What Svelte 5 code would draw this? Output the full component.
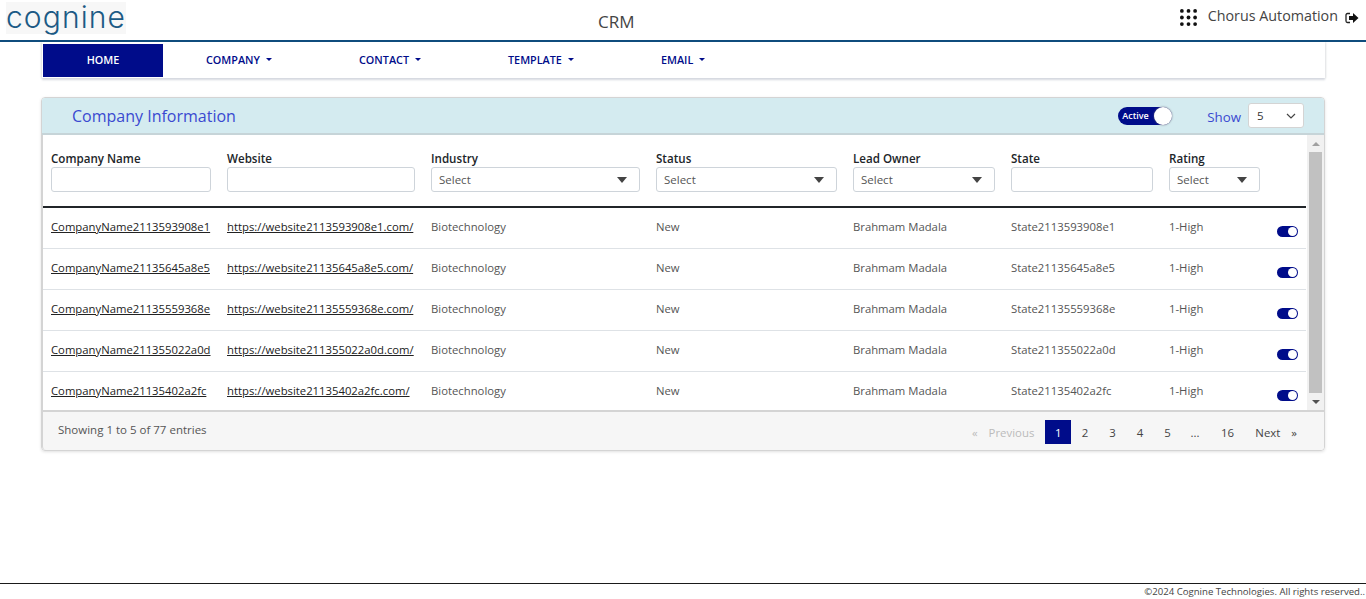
<script>
  const navItems = [
    { label: "COMPANY", width: 153 },
    { label: "CONTACT", width: 149 },
    { label: "TEMPLATE", width: 153 },
    { label: "EMAIL", width: 100 },
  ];
  const ids = ["2113593908e1", "21135645a8e5", "21135559368e", "211355022a0d", "21135402a2fc"];
  const pages = ["2", "3", "4", "5", "..."];
  const filters = [
    { name: "Company Name", w: 160 },
    { name: "Website", w: 188 },
    { name: "Industry", w: 209, select: true },
    { name: "Status", w: 181, select: true },
    { name: "Lead Owner", w: 142, select: true },
    { name: "State", w: 142 },
    { name: "Rating", w: 91, select: true },
  ];
</script>

<div class="page">
  <header class="top">
    <div class="logo">cognine</div>
    <div class="app-title">CRM</div>
    <div class="user">
      <svg class="grid-icon" width="17" height="17" viewBox="0 0 18 18" fill="#111">
        {#each [2, 9, 16] as y}
          {#each [2, 9, 16] as x}
            <circle cx={x} cy={y} r="2" />
          {/each}
        {/each}
      </svg>
      <span class="user-name">Chorus Automation</span>
      <svg class="logout" width="14" height="12" viewBox="0 0 14 12">
        <path d="M5 1.500H2.500A1.500 1.500 0 0 0 1 3v6a1.500 1.500 0 0 0 1.500 1.500H5" fill="none" stroke="#222" stroke-width="1.300" />
        <path d="M4 4h4V1l5.500 5L8 11V8H4z" fill="#111" />
      </svg>
    </div>
  </header>

  <nav class="nav">
    <a class="nav-home" href="#home">HOME</a>
    {#each navItems as item}
      <a class="nav-item" href="#menu" style="width: {item.width}px">{item.label}<span class="caret"></span></a>
    {/each}
  </nav>

  <section class="card">
    <div class="card-head">
      <h2>Company Information</h2>
      <div class="card-tools">
        <div class="active-toggle"><span>Active</span><i></i></div>
        <span class="show">Show</span>
        <div class="show-select">
          <span>5</span>
          <svg width="10" height="6" viewBox="0 0 10 6"><path d="M1 1l4 4 4-4" fill="none" stroke="#444" stroke-width="1.200" /></svg>
        </div>
      </div>
    </div>

    <div class="table-wrap">
      <table>
        <colgroup>
          <col style="width: 176px" /><col style="width: 204px" /><col style="width: 225px" /><col style="width: 197px" />
          <col style="width: 158px" /><col style="width: 158px" /><col style="width: 96px" /><col />
        </colgroup>
        <thead>
          <tr>
            {#each filters as f}
              <th>
                <div class="th-label">{f.name}</div>
                <div class="filter" style="width: {f.w}px">
                  {#if f.select}
                    <span>Select</span><b class="tri"></b>
                  {/if}
                </div>
              </th>
            {/each}
            <th></th>
          </tr>
        </thead>
        <tbody>
          {#each ids as id}
            <tr>
              <td><a href="#c">CompanyName{id}</a></td>
              <td><a href="#w">https://website{id}.com/</a></td>
              <td>Biotechnology</td>
              <td>New</td>
              <td>Brahmam Madala</td>
              <td>State{id}</td>
              <td>1-High</td>
              <td class="toggle-cell"><div class="mini-toggle"><i></i></div></td>
            </tr>
          {/each}
        </tbody>
      </table>
      <div class="scrollbar">
        <div class="arrow up"></div>
        <div class="thumb"></div>
        <div class="arrow down"></div>
      </div>
    </div>

    <div class="card-foot">
      <div class="entries">Showing 1 to 5 of 77 entries</div>
      <div class="pager">
        <span class="muted"><span class="chev">«</span>Previous</span>
        <span class="current">1</span>
        {#each pages as p}
          <span class="pg">{p}</span>
        {/each}
        <span class="pg last">16</span>
        <span class="next">Next<span class="chev-r">»</span></span>
      </div>
    </div>
  </section>

  <footer class="foot">©2024 Cognine Technologies. All rights reserved..</footer>
</div>

<style>
  :global(body) {
    margin: 0;
    background: #fff;
    font-family: "Open Sans", "Noto Sans", sans-serif;
    color: #444;
  }

  .page {
    height: 599px;
    display: flex;
    flex-direction: column;
    overflow: hidden;
  }

  .top {
    height: 40px;
    border-bottom: 2px solid #0f4c7d;
    display: flex;
    align-items: flex-start;
    position: relative;
    flex-shrink: 0;
  }

  .logo {
    margin: 2px 0 0 6px;
    width: 120px;
    height: 32px;
    background: #f7f7f7;
    color: #1c5a85;
    font-family: Inter, sans-serif;
    font-weight: 300;
    font-size: 30px;
    line-height: 30px;
    letter-spacing: 1.1px;
    text-align: center;
  }

  .app-title {
    position: absolute;
    left: 598px;
    top: 11px;
    font-size: 17px;
    line-height: 22px;
    color: #444;
  }

  .user {
    margin-left: auto;
    display: flex;
    align-items: center;
    padding: 6px 7px 0 0;
  }

  .grid-icon {
    margin-top: 3px;
  }

  .user-name {
    margin-left: 11px;
    margin-top: -1px;
    font-size: 14.300px;
    line-height: 18px;
    color: #444;
  }

  .logout {
    margin: 3px 0 0 7px;
  }

  .nav {
    margin: 0 41px 0 42px;
    height: 33px;
    padding: 2px 0 1px 1px;
    display: flex;
    background: #fff;
    box-shadow: 0 2px 2px #d5d8df, 1px 0 2px #e8e8e8, -1px 0 2px #e8e8e8;
    flex-shrink: 0;
  }

  .nav a {
    text-decoration: none;
    font-size: 10.800px;
    font-weight: 600;
    display: flex;
    align-items: center;
    height: 33px;
    padding-bottom: 2px;
    box-sizing: border-box;
  }

  .nav-home {
    width: 120px;
    justify-content: center;
    background: #000c8a;
    color: #fff;
  }

  .nav-item {
    color: #000c8a;
    padding-left: 43px;
  }

  .caret {
    margin-left: 6px;
    border-top: 3px solid #000c8a;
    border-left: 3px solid transparent;
    border-right: 3px solid transparent;
  }

  .card {
    margin: 19px 41px 0;
    height: 352px;
    border: 1px solid #d4d4d4;
    border-radius: 4px;
    box-shadow: 0 1px 3px rgba(0, 0, 0, 0.12);
    display: flex;
    flex-direction: column;
    flex-shrink: 0;
  }

  .card-head {
    height: 35px;
    background: #d4ebf0;
    border-bottom: 2px solid #c6d4d8;
    border-radius: 3px 3px 0 0;
    display: flex;
    align-items: center;
    justify-content: space-between;
    padding: 0 20px 0 30px;
    flex-shrink: 0;
  }

  h2 {
    margin: 0;
    font-size: 16px;
    font-weight: 400;
    color: #3a49d0;
  }

  .card-tools {
    display: flex;
    align-items: center;
  }

  .active-toggle {
    width: 54px;
    height: 18px;
    border-radius: 9px;
    background: #000c8a;
    display: flex;
    align-items: center;
    justify-content: space-between;
    color: #fff;
    margin-right: 35px;
  }

  .active-toggle span {
    font-size: 9px;
    font-weight: 600;
    padding-left: 4px;
  }

  .active-toggle i {
    width: 18px;
    height: 18px;
    background: #fff;
    border-radius: 50%;
    box-shadow: 0 0 2px #667;
  }

  .show {
    font-size: 13.300px;
    color: #3a49d0;
    margin-right: 7px;
    margin-top: 2px;
  }

  .show-select {
    width: 56px;
    height: 25px;
    background: #fff;
    border: 1px solid #d4d4d4;
    border-radius: 3px;
    display: flex;
    align-items: center;
    justify-content: space-between;
    padding: 0 7px 0 8px;
    box-sizing: border-box;
    font-size: 11.500px;
    color: #333;
  }

  .table-wrap {
    height: 275px;
    display: flex;
    overflow: hidden;
    border-left: 1px solid #d4d4d4;
    border-bottom: 2px solid #d4d4d4;
    flex-shrink: 0;
  }

  table {
    width: 1263px;
    flex-shrink: 0;
    table-layout: fixed;
    border-collapse: collapse;
    align-self: flex-start;
  }

  th {
    height: 71px;
    padding: 0 0 0 8px;
    text-align: left;
    vertical-align: top;
    border-bottom: 2px solid #212529;
    overflow: visible;
    white-space: nowrap;
  }

  .th-label {
    margin-top: 16px;
    font-size: 11.600px;
    line-height: 16px;
    font-weight: 600;
    color: #212529;
  }

  .filter {
    height: 25px;
    margin-top: 0;
    border: 1px solid #ced4da;
    border-radius: 3px;
    box-sizing: border-box;
    display: flex;
    align-items: center;
    justify-content: space-between;
    padding: 0 12px 0 7px;
    font-size: 11.500px;
    font-weight: 400;
    color: #555;
  }

  .tri {
    border-top: 6px solid #444;
    border-left: 5px solid transparent;
    border-right: 5px solid transparent;
  }

  td {
    height: 41px;
    padding: 0 0 3px 8px;
    box-sizing: border-box;
    border-bottom: 1px solid #dee2e6;
    font-size: 11.300px;
    color: #555;
    white-space: nowrap;
    overflow: visible;
  }

  td a {
    color: #222;
    text-decoration: underline;
  }

  td.toggle-cell {
    padding: 7px 0 0 20px;
  }

  .mini-toggle {
    width: 21px;
    height: 11px;
    border-radius: 6px;
    background: #000c8a;
    position: relative;
  }

  .mini-toggle i {
    position: absolute;
    right: 1px;
    top: 1px;
    width: 9px;
    height: 9px;
    border-radius: 50%;
    background: #fff;
  }

  .scrollbar {
    width: 17px;
    margin-left: 1px;
    background: #f1f1f1;
    display: flex;
    flex-direction: column;
    align-items: center;
  }

  .thumb {
    width: 13px;
    flex: 1;
    background: #c1c1c1;
  }

  .arrow {
    height: 17px;
    width: 13px;
    display: flex;
    justify-content: center;
    align-items: center;
    position: relative;
  }

  .arrow::after {
    content: "";
    border-left: 4px solid transparent;
    border-right: 4px solid transparent;
  }

  .arrow.up::after {
    border-bottom: 4px solid #a0a0a0;
  }

  .arrow.down::after {
    border-top: 4px solid #505050;
  }

  .card-foot {
    flex: 1;
    background: #f6f6f6;
    border-left: 1px solid #d4d4d4;
    border-radius: 0 0 4px 4px;
    display: flex;
    justify-content: space-between;
    align-items: center;
    padding: 0 27px 0 15px;
    font-size: 11.500px;
    color: #555;
  }

  .entries {
    margin-top: -3px;
  }

  .pager {
    display: flex;
    align-items: center;
    margin-top: 2px;
    font-size: 11.400px;
    color: #444;
  }

  .muted {
    color: #bbb;
    margin-right: 11px;
  }

  .chev {
    margin-right: 11px;
  }

  .current {
    width: 26px;
    height: 24px;
    display: flex;
    align-items: center;
    justify-content: center;
    background: #000c8a;
    color: #fff;
  }

  .pg {
    min-width: 27.500px;
    text-align: center;
  }

  .pg.last {
    margin-left: 5px;
  }

  .next {
    margin-left: 14px;
  }

  .chev-r {
    margin-left: 11px;
  }

  .foot {
    position: absolute;
    left: 0;
    right: 0;
    top: 583px;
    height: 15px;
    border-top: 1px solid #1a1a1a;
    font-size: 9.600px;
    line-height: 15px;
    text-align: right;
    padding-right: 1px;
    color: #444;
  }
</style>
